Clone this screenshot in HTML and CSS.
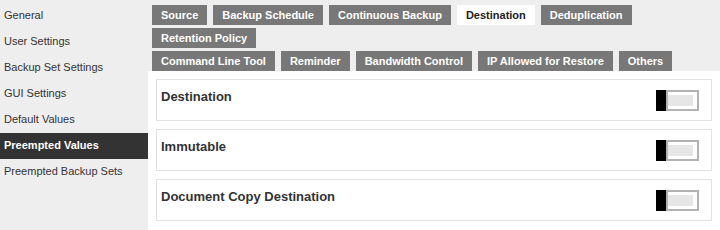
FILE: index.html
```html
<!DOCTYPE html>
<html lang="en">
<head>
    <meta charset="UTF-8">
    <title>Preempted Values</title>
    <link rel="stylesheet" href="styles.css">
</head>
<body>
    <div class="page">
        <!-- Left menu -->
        <ul class="side-menu">
            <li>General</li>
            <li>User Settings</li>
            <li>Backup Set Settings</li>
            <li>GUI Settings</li>
            <li>Default Values</li>
            <li class="active">Preempted Values</li>
            <li>Preempted Backup Sets</li>
        </ul>

        <div class="main">
            <div class="tabs">
                <div class="tab-row">
                    <span class="tab">Source</span>
                    <span class="tab">Backup Schedule</span>
                    <span class="tab">Continuous Backup</span>
                    <span class="tab active">Destination</span>
                    <span class="tab">Deduplication</span>
                    <span class="tab">Retention Policy</span>
                </div>
                <div class="tab-row">
                    <span class="tab">Command Line Tool</span>
                    <span class="tab">Reminder</span>
                    <span class="tab">Bandwidth Control</span>
                    <span class="tab">IP Allowed for Restore</span>
                    <span class="tab">Others</span>
                </div>
            </div>

            <div class="content">
                <div class="card">
                    <div class="card-title">Destination</div>
                    <span class="toggle"><span class="track"></span></span>
                </div>
                <div class="card">
                    <div class="card-title">Immutable</div>
                    <span class="toggle"><span class="track"></span></span>
                </div>
                <div class="card">
                    <div class="card-title">Document Copy Destination</div>
                    <span class="toggle"><span class="track"></span></span>
                </div>
            </div>
        </div>
    </div>
</body>
</html>
```

FILE: styles.css
```css
html, body {
    height: 100%;
}

body {
    margin: 0;
    font-family: "Liberation Sans", Arial, sans-serif;
    background-color: #eeeeee;
    color: #333;
}

.page {
    display: flex;
    height: 100%;
}

/* Left menu */
.side-menu {
    list-style: none;
    margin: 0;
    padding: 3px 0 0 0;
    width: 148px;
    flex-shrink: 0;
}

.side-menu li {
    height: 26px;
    line-height: 24px;
    padding-left: 4px;
    font-size: 11px;
    color: #333;
}

.side-menu li.active {
    background-color: #333;
    color: #fff;
    font-weight: bold;
}

/* Right side */
.main {
    flex: 1;
    display: flex;
    flex-direction: column;
}

.tabs {
    padding: 5px 4px 0 4px;
}

.tab-row {
    display: flex;
    flex-wrap: wrap;
    gap: 3px 6px;
    margin-bottom: 3px;
}

.tab-row:last-child {
    margin-bottom: 0;
}

.tab {
    display: block;
    height: 20px;
    line-height: 20px;
    padding: 0 9px;
    background-color: #787878;
    color: #fff;
    font-size: 11px;
    font-weight: bold;
}

.tab.active {
    background-color: #fff;
    color: #222;
}

.content {
    flex: 1;
    background-color: #fff;
    padding: 8px;
    display: flex;
    flex-direction: column;
    gap: 8px;
}

.card {
    height: 42px;
    box-sizing: border-box;
    border: 1px solid #e2e2e2;
    display: flex;
    justify-content: space-between;
    padding: 0 12px 0 4px;
}

.card-title {
    padding-top: 9px;
    font-size: 13px;
    line-height: 16px;
    font-weight: bold;
    color: #333;
}

/* Switch */
.toggle {
    align-self: center;
    display: flex;
    height: 21px;
}

.toggle::before {
    content: "";
    width: 10px;
    background-color: #000;
}

.track {
    position: relative;
    width: 33px;
    box-sizing: border-box;
    border: 2px solid #b2b2b2;
    background-color: #fff;
}

.track::after {
    content: "";
    position: absolute;
    top: 3px;
    bottom: 3px;
    left: 0;
    right: 4px;
    background-color: #e6e6e6;
}
```
